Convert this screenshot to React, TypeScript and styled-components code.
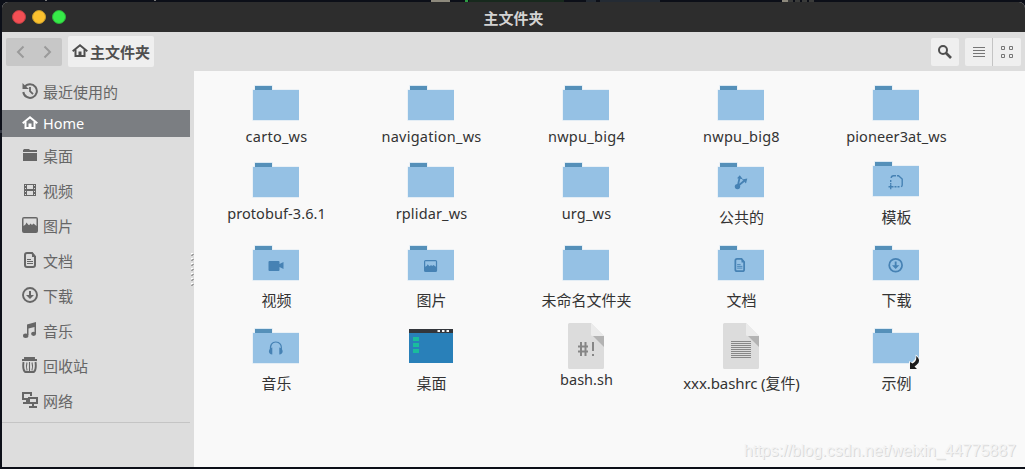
import React from "react";
import styled, { createGlobalStyle } from "styled-components";

const Global = createGlobalStyle`
  html, body { margin: 0; padding: 0; background: #0c0f18; }
  body { overflow: hidden; }
  * { box-sizing: border-box; }
`;

const SANS = `"Noto Sans", "Noto Sans CJK SC", sans-serif`;

const Desktop = styled.div`
  position: relative;
  width: 1025px;
  height: 469px;
  padding: 2px 0 2px 2px;
  background: #0c0f18;
  font-family: ${SANS};
  font-size: 15px;
  overflow: hidden;
`;

const Wallpaper = styled.svg`
  position: absolute;
  left: 0;
  top: 0;
`;

const Window = styled.div`
  position: relative;
  display: flex;
  flex-direction: column;
  height: 465px;
  border-radius: 6px 6px 0 0;
  overflow: hidden;
  background: #dddddd;
`;

const TitleBar = styled.header`
  display: grid;
  grid-template-columns: 1fr auto 1fr;
  align-items: center;
  height: 30px;
  flex: none;
  background: #2d2d2d;
`;

const Lights = styled.div`
  display: flex;
  gap: 6px;
  padding-left: 10px;
`;

const Light = styled.span<{ $fill: string; $edge: string }>`
  width: 14px;
  height: 14px;
  border-radius: 50%;
  background: ${(p) => p.$fill};
  border: 1px solid ${(p) => p.$edge};
`;

const Title = styled.h1`
  margin: 0;
  padding-top: 1px;
  font-size: 15px;
  line-height: 22px;
  font-weight: 700;
  color: #d3d3d3;
`;

const Toolbar = styled.div`
  display: flex;
  align-items: center;
  height: 39px;
  flex: none;
  padding: 0 4px 0 4px;
  background: #dddddd;
`;

const ButtonGroup = styled.div<{ $tone: string; $ml?: string }>`
  display: flex;
  height: 28px;
  margin-left: ${(p) => p.$ml ?? "0"};
  border-radius: 2px;
  overflow: hidden;
  background: ${(p) => p.$tone};
`;

const IconButton = styled.button<{ $divided?: boolean }>`
  display: flex;
  align-items: center;
  justify-content: center;
  width: 28px;
  height: 28px;
  padding: 0;
  border: 0;
  box-shadow: ${(p) => (p.$divided ? "inset -1px 0 0 #c4c4c4" : "none")};
  background: transparent;
`;

const PathButton = styled.button`
  display: flex;
  align-items: center;
  gap: 2px;
  height: 31px;
  width: 86px;
  margin-left: 6px;
  padding: 0 0 0 4px;
  border: 0;
  border-radius: 2px;
  background: #efefef;
  color: #4f4f4f;
  font: 700 15px/22px ${SANS};
  white-space: nowrap;
  svg { margin-bottom: 1px; }
`;

const Body = styled.div`
  display: flex;
  flex: 1;
  min-height: 0;
`;

const Sidebar = styled.nav`
  position: relative;
  width: 192px;
  flex: none;
  padding: 4px 4px 0 0;
`;

const Place = styled.div<{ $active?: boolean }>`
  display: flex;
  align-items: center;
  gap: 5px;
  height: ${(p) => (p.$active ? 27 : 35)}px;
  margin-bottom: ${(p) => (p.$active ? 2 : 0)}px;
  padding-left: 20px;
  background: ${(p) => (p.$active ? "#7b7e82" : "transparent")};
  color: ${(p) => (p.$active ? "#ffffff" : "#666666")};
  font-size: ${(p) => (p.$active ? 14.5 : 15)}px;
  svg { flex: none; margin-bottom: ${(p) => (p.$active ? 1 : 3)}px; }
`;

const PlaceName = styled.span`
  line-height: 22px;
  padding-bottom: 2px;
`;

const Separator = styled.hr`
  margin: 3px 0 0;
  border: 0;
  border-top: 1px solid #c4c4c4;
`;

const Grip = styled.svg`
  position: absolute;
  right: 0;
  top: 182px;
`;

const Files = styled.main`
  flex: 1;
  display: grid;
  grid-template-columns: repeat(5, 155px);
  grid-template-rows: 77px 83px 83px 83px;
  padding: 9px 0 0 4px;
  background: #f9f9f9;
`;

const FileItem = styled.figure`
  display: flex;
  flex-direction: column;
  align-items: center;
  margin: 0;
  svg { flex: none; }
`;

const FileName = styled.figcaption<{ $latin: boolean; $track: number }>`
  margin-top: -1px;
  padding-left: 2px;
  font-size: ${(p) => (p.$latin ? 14.5 : 15)}px;
  line-height: ${(p) => (p.$latin ? 18 : 26)}px;
  letter-spacing: ${(p) => p.$track}px;
  color: #333333;
  white-space: nowrap;
`;

const Watermark = styled.div`
  position: absolute;
  right: 9px;
  bottom: 6px;
  font: 16px/20px "Liberation Sans", Arial, sans-serif;
  color: #f3f3f3;
  text-shadow: 1px 1px 0 #dadada;
  white-space: nowrap;
`;

const Svg = ({ children, size = 16 }: { children: React.ReactNode; size?: number }) => (
  <svg width={size} height={size} viewBox={`0 0 ${size} ${size}`} fill="none" stroke="currentColor" strokeWidth="2">
    {children}
  </svg>
);

const HomeIcon = () => (
  <Svg>
    <path d="M.7 8.300 8 2.300l7.300 6" />
    <path d="M3.500 6.500V13h9V6.500" />
    <path d="M8 8.500V14" strokeWidth="3" />
  </Svg>
);

const RecentIcon = () => (
  <Svg>
    <path d="M2.600 4A6.800 6.800 0 1 1 1.300 9" />
    <path d="M.5 0v6H7L4.500 4z" fill="currentColor" stroke="none" />
    <path d="M8 4v4.200l3 3" strokeWidth="1.800" />
  </Svg>
);

const FolderIcon = () => (
  <Svg>
    <path d="M1 3.200 2 2h5l1 1h7v2H1zM1 6h14v8H1z" fill="currentColor" stroke="none" />
  </Svg>
);

const FilmIcon = () => (
  <Svg>
    <path d="M2 2h12v12H2z M3 3v1h1V3z M3 6v1h1V6z M3 9v1h1V9z M3 12v1h1v-1z M12 3v1h1V3z M12 6v1h1V6z M12 9v1h1V9z M12 12v1h1v-1z M5 3v4h6V3z M5 9v4h6V9z" fill="currentColor" fillRule="evenodd" stroke="none" />
  </Svg>
);

const PictureShape = () => (
  <path d="M2 0h12a2 2 0 0 1 2 2v12a2 2 0 0 1-2 2H2a2 2 0 0 1-2-2V2a2 2 0 0 1 2-2zM1.500 1.500V9l2-1.500 1-2 1.600 2 1 .8 1.400-1.800L10 8l1.500-1.500 3 2.500V1.500z" fill="currentColor" fillRule="evenodd" stroke="none" />
);

const DocShape = () => (
  <>
    <path d="M3 3a2 2 0 0 1 2-2h5l3 3.500V13a2 2 0 0 1-2 2H5a2 2 0 0 1-2-2z" />
    <path d="M10 0v5h4z" fill="currentColor" stroke="none" />
    <path d="M5 7.500h4M5 9.500h6M5 11.500h6" strokeWidth="1" />
  </>
);

const DownloadShape = () => (
  <>
    <circle cx="8" cy="8" r="7" strokeWidth="1.900" />
    <path d="M7 4h2v4h3l-4 4-4-4h3z" fill="currentColor" stroke="none" />
  </>
);

const MusicIcon = () => (
  <Svg>
    <path d="M5 2.500 14 0v11.500h-1.500V5l-6 1.600V13H5z" fill="currentColor" stroke="none" />
    <ellipse cx="3.700" cy="13.700" rx="2.700" ry="2.200" fill="currentColor" stroke="none" />
    <ellipse cx="11.600" cy="11.800" rx="2.500" ry="2.100" fill="currentColor" stroke="none" />
  </Svg>
);

const TrashIcon = () => (
  <Svg>
    <path d="M0 3h15M3 2.500V1h9v1.500" strokeWidth="1.900" />
    <path d="M1.500 5C.8 10 1.400 13.600 3.200 15h8.600c1.800-1.400 2.400-5 1.700-10" strokeWidth="1.900" />
    <path d="M5 5.500C4.200 8 4.200 11 5.100 13.500M7.500 5v9M10 5.500C10.800 8 10.800 11 9.900 13.500" strokeWidth="1.100" />
  </Svg>
);

const NetworkIcon = () => (
  <Svg>
    <path d="M6 7H1V1h8v3M5 7v3M1 11h5" />
    <path d="M7 6h8v5H7zM11 11v3M7 15h8" />
  </Svg>
);

const SearchIcon = () => (
  <svg width="16" height="16" viewBox="0 0 16 16" fill="none" stroke="#4e4e4e" strokeWidth="2">
    <circle cx="6" cy="6" r="4" />
    <path d="m9 9 5 5" strokeWidth="2.600" />
  </svg>
);

const ListIcon = () => (
  <svg width="12" height="12" viewBox="0 0 12 12" fill="none" stroke="#767676">
    <path d="M0 1.500h12M0 4.500h12M0 7.500h12M0 10.500h12" />
  </svg>
);

const GridIcon = () => (
  <svg width="12" height="12" viewBox="0 0 12 12" fill="none" stroke="#767676">
    <path d="M.5.500h3v3h-3zM8.500.500h3v3h-3zM.5 8.500h3v3h-3zM8.500 8.500h3v3h-3z" />
  </svg>
);

const Chevron = ({ d }: { d: string }) => (
  <svg width="16" height="16" viewBox="0 0 16 16" fill="none" stroke="#9a9a9a" strokeWidth="2">
    <path d={d} />
  </svg>
);

type Kind =
  | "folder" | "share" | "template" | "video" | "picture" | "doc"
  | "download" | "music" | "desktop" | "script" | "text" | "link";

const EMBLEM = "#4682b4";

const Emblem = ({ kind }: { kind: Kind }) => {
  const paint = { color: EMBLEM, stroke: EMBLEM, fill: "none", strokeWidth: 2 };
  switch (kind) {
    case "share":
      return (
        <g {...paint} strokeWidth="1.800">
          <circle cx="20.500" cy="29.600" r="2.700" fill={EMBLEM} stroke="none" />
          <path d="m21 29 6-5M20.800 29l1.700-8" />
          <path d="m30.300 21.500-1.300 5-4-4zM22.800 18.300l3 4-5.800-1z" fill={EMBLEM} stroke="none" />
        </g>
      );
    case "template":
      return (
        <g {...paint} strokeWidth="1.400">
          <path d="M25 18.700h1.500l3.700 3.300v6a1.700 1.700 0 0 1-1.200 1.700" />
          <path d="M24 18.700h-2.500a2.500 2.500 0 0 0-2.300 2.300M18.700 23v2M18.700 26v1M22.500 29.700h2M25.500 29.700h2" />
          <path d="M16.500 29.700h5M18.700 27.200v5" />
        </g>
      );
    case "video":
      return (
        <path d="M17.500 21h9a1 1 0 0 1 1 1v2l4-2v7l-4-2v3a1 1 0 0 1-1 1h-9a1 1 0 0 1-1-1V22a1 1 0 0 1 1-1z" fill={EMBLEM} />
      );
    case "picture":
      return <g {...paint} transform="translate(17 20) scale(.82 .75)"><PictureShape /></g>;
    case "doc":
      return <g {...paint} transform="translate(15.700 18) scale(.88)"><DocShape /></g>;
    case "download":
      return <g {...paint} transform="translate(16.300 17.900) scale(.92)"><DownloadShape /></g>;
    case "music":
      return (
        <g {...paint}>
          <path d="M18.800 28.500c-1.500-7 1.700-9.500 5-9.500s7 2.500 5 9.500" strokeWidth="1.200" />
          <path d="M20.300 24.500v7c-4.500 0-4.500-6 0-7zM27.300 24.500v7c4.500 0 4.500-6 0-7z" fill={EMBLEM} stroke="none" />
        </g>
      );
    default:
      return null;
  }
};

const Folder = ({ kind }: { kind: Kind }) => (
  <g transform={kind === "template" ? "translate(0 -1)" : undefined}>
    <path d="M2.500 5h18v5.200h-18zM.5 9.500h46.500v31.200H.5z" fill="#dbe9f3" />
    <path d="M3 6h17v4H3z" fill="#5590b9" />
    <path d="M1 10h46v30H1z" fill="#95c1e4" />
    <g transform={kind === "template" ? "translate(0 1)" : undefined}>
      <Emblem kind={kind} />
    </g>
    {kind === "link" && (
      <g>
        <path d="M43.500 31.500c5 3 4.500 7-.5 11.500l2 3H37v-8l2.500 1.500c3-2 5-4.500 4-8z" fill="#f7f7f7" />
        <path d="M44 33c4.500 3 4 7-1.500 10.500l2.500 2.500h-7v-7l2.500 1.500c3-1.500 4.500-4 3.500-7.500z" fill="#1c1c1c" />
      </g>
    )}
  </g>
);

const Sheet = ({ kind }: { kind: Kind }) => (
  <g>
    <path d="M7 0h22l13 13v31.500a1.500 1.500 0 0 1-1.500 1.500h-33A1.500 1.500 0 0 1 6 44.500v-43A1.500 1.500 0 0 1 7.500 0z" fill="#dcdcdc" />
    <path d="M29 0v11.500a1.500 1.500 0 0 0 1.500 1.500H42z" fill="#ebebeb" />
    <path d="M31 13h11v11z" fill="#b3b3b3" />
    {kind === "script" ? (
      <path d="M19 19v14M23.500 19v14M16 23.500h10M16 28.500h10M31 19v9M31 31v2" fill="none" stroke="#868686" strokeWidth="2" />
    ) : (
      <path d="M14 18.500h20M14 20.500h20M14 22.500h20M14 24.500h20M14 26.500h20M14 28.500h20M14 30.500h20M14 32.500h20M14 34.500h20" stroke="#878787" />
    )}
  </g>
);

const Monitor = () => (
  <g>
    <path d="M2 6h44v34H2z" fill="#2980b9" />
    <path d="M2 6h44v4H2z" fill="#33363b" />
    <path d="M30.500 7h2.500v2h-2.500zM35 7h2.500v2H35zM39.500 7H42v2h-2.500z" fill="#f9f9f9" />
    <path d="M6 14h6v4H6zM6 20h6v4H6zM6 26h6v4H6z" fill="#1abc9c" />
  </g>
);

const FileIcon = ({ kind }: { kind: Kind }) => (
  <svg width="48" height="48" viewBox="0 0 48 48">
    {kind === "desktop" ? <Monitor /> : kind === "script" || kind === "text" ? <Sheet kind={kind} /> : <Folder kind={kind} />}
  </svg>
);

const files: { name: string; kind: Kind; track?: number }[] = [
  { name: "carto_ws", kind: "folder", track: 0.25 },
  { name: "navigation_ws", kind: "folder", track: 0.25 },
  { name: "nwpu_big4", kind: "folder", track: 0.3 },
  { name: "nwpu_big8", kind: "folder", track: 0.25 },
  { name: "pioneer3at_ws", kind: "folder", track: 0.12 },
  { name: "protobuf-3.6.1", kind: "folder", track: 0.08 },
  { name: "rplidar_ws", kind: "folder", track: 0.15 },
  { name: "urg_ws", kind: "folder", track: 0.2 },
  { name: "公共的", kind: "share" },
  { name: "模板", kind: "template" },
  { name: "视频", kind: "video" },
  { name: "图片", kind: "picture" },
  { name: "未命名文件夹", kind: "folder" },
  { name: "文档", kind: "doc" },
  { name: "下载", kind: "download" },
  { name: "音乐", kind: "music" },
  { name: "桌面", kind: "desktop" },
  { name: "bash.sh", kind: "script" },
  { name: "xxx.bashrc (复件)", kind: "text", track: -0.1 },
  { name: "示例", kind: "link" },
];

const places: { name: string; icon: React.ReactNode; active?: boolean }[] = [
  { name: "最近使用的", icon: <RecentIcon /> },
  { name: "Home", icon: <HomeIcon />, active: true },
  { name: "桌面", icon: <FolderIcon /> },
  { name: "视频", icon: <FilmIcon /> },
  { name: "图片", icon: <Svg><PictureShape /></Svg> },
  { name: "文档", icon: <Svg><DocShape /></Svg> },
  { name: "下载", icon: <Svg><DownloadShape /></Svg> },
  { name: "音乐", icon: <MusicIcon /> },
  { name: "回收站", icon: <TrashIcon /> },
  { name: "网络", icon: <NetworkIcon /> },
];

export default function App() {
  return (
    <Desktop>
      <Global />
      <Wallpaper width="1025" height="469" fill="none">
        <path d="M431 1h19M782 1h6" stroke="#8d897c" strokeWidth="2" />
        <path d="M788 1h28" stroke="#3a3b3a" strokeWidth="2" strokeDasharray="5 2" />
        <path d="M465 1h3" stroke="#2c9a42" strokeWidth="2" />
        <path d="M469 1h95" stroke="#17291d" strokeWidth="2" />
        <path d="M586 1h10M600 1h60" stroke="#242b34" strokeWidth="2" />
        <path d="M45 .5h2M154 .5h2" stroke="#777" />
        <path d="M1 130v3" stroke="#555b66" />
      </Wallpaper>
      <Window>
        <TitleBar>
          <Lights>
            <Light $fill="#f34f54" $edge="#b83d42" />
            <Light $fill="#fbc12e" $edge="#c2982b" />
            <Light $fill="#36ea48" $edge="#2cae39" />
          </Lights>
          <Title>主文件夹</Title>
        </TitleBar>
        <Toolbar>
          <ButtonGroup $tone="#c7c7c7">
            <IconButton aria-label="back"><Chevron d="M11.500 2.500 6 8l5.500 5.500" /></IconButton>
            <IconButton aria-label="forward"><Chevron d="M4.500 2.500 10 8l-5.500 5.500" /></IconButton>
          </ButtonGroup>
          <PathButton>
            <HomeIcon />
            <span>主文件夹</span>
          </PathButton>
          <ButtonGroup $tone="#efefef" $ml="auto">
            <IconButton aria-label="search"><SearchIcon /></IconButton>
          </ButtonGroup>
          <ButtonGroup $tone="#efefef" $ml="6px">
            <IconButton aria-label="list view" $divided><ListIcon /></IconButton>
            <IconButton aria-label="grid view"><GridIcon /></IconButton>
          </ButtonGroup>
        </Toolbar>
        <Body>
          <Sidebar>
            {places.map((p) => (
              <Place key={p.name} $active={p.active}>
                {p.icon}
                <PlaceName>{p.name}</PlaceName>
              </Place>
            ))}
            <Separator />
            <Grip width="4" height="36" viewBox="0 0 4 36">
              {[0, 5, 10, 15, 20, 25, 30].map((y) => (
                <g key={y}>
                  <path d={`M2 ${y + 1.5}h2M1 ${y + 2.5}h2`} stroke="#a0a0a0" />
                  <path d={`M1 ${y + 0.5}h2`} stroke="#ffffff" />
                </g>
              ))}
            </Grip>
          </Sidebar>
          <Files>
            {files.map((f) => (
              <FileItem key={f.name}>
                <FileIcon kind={f.kind} />
                <FileName $latin={/^[\x20-\x7e]+$/.test(f.name)} $track={f.track ?? 0}>{f.name}</FileName>
              </FileItem>
            ))}
          </Files>
        </Body>
        <Watermark>https://blog.csdn.net/weixin_44775887</Watermark>
      </Window>
    </Desktop>
  );
}
